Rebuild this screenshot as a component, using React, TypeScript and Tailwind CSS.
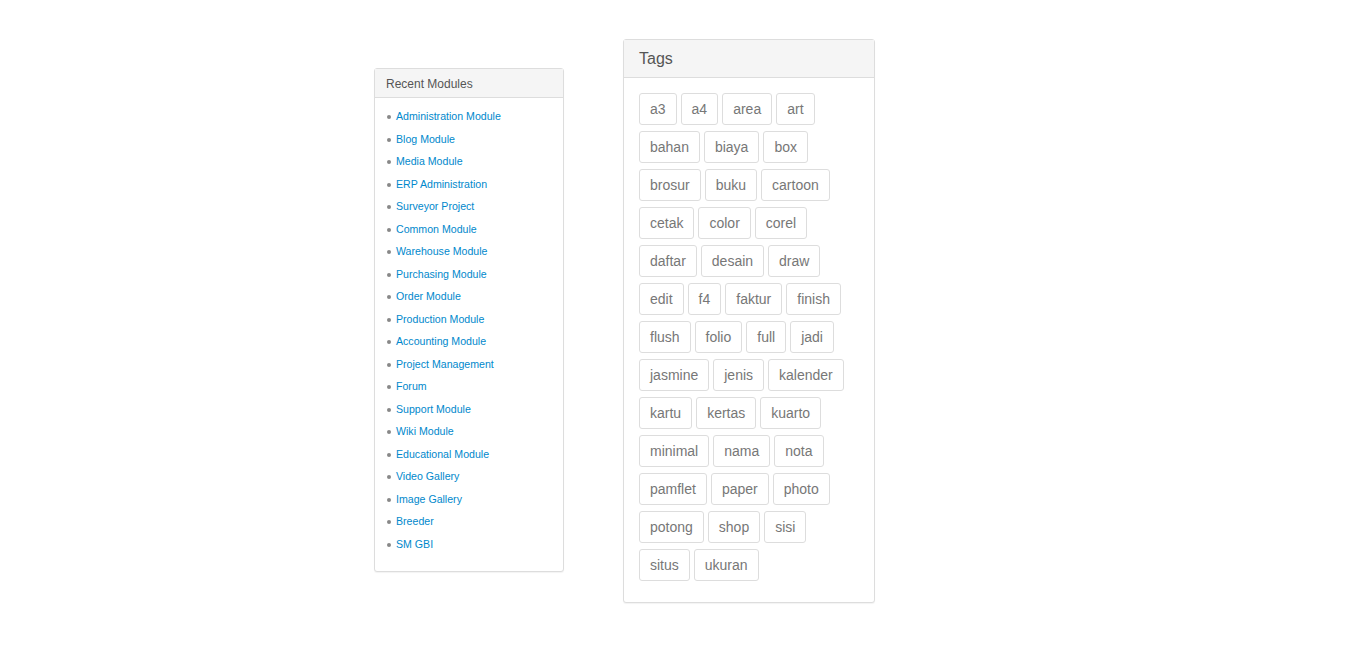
import React from 'react';

const modules: string[] = [
  'Administration Module',
  'Blog Module',
  'Media Module',
  'ERP Administration',
  'Surveyor Project',
  'Common Module',
  'Warehouse Module',
  'Purchasing Module',
  'Order Module',
  'Production Module',
  'Accounting Module',
  'Project Management',
  'Forum',
  'Support Module',
  'Wiki Module',
  'Educational Module',
  'Video Gallery',
  'Image Gallery',
  'Breeder',
  'SM GBI',
];

const tags: string[] = [
  'a3', 'a4', 'area', 'art',
  'bahan', 'biaya', 'box',
  'brosur', 'buku', 'cartoon',
  'cetak', 'color', 'corel',
  'daftar', 'desain', 'draw',
  'edit', 'f4', 'faktur', 'finish',
  'flush', 'folio', 'full', 'jadi',
  'jasmine', 'jenis', 'kalender',
  'kartu', 'kertas', 'kuarto',
  'minimal', 'nama', 'nota',
  'pamflet', 'paper', 'photo',
  'potong', 'shop', 'sisi',
  'situs', 'ukuran',
];

const RecentModules: React.FC = () => (
  <div className="mt-[68px] w-[190px] rounded-[3px] border border-[#dddddd] bg-white shadow-[0_1px_1px_rgba(0,0,0,0.05)]">
    <div className="h-[29px] border-b border-[#dddddd] bg-[#f5f5f5] px-[11px] pt-[1px] text-[12px] leading-[28px] text-[#555555]">
      Recent Modules
    </div>
    <ul className="pt-[8px] pb-[15px] pl-[12px]">
      {modules.map((m) => (
        <li key={m} className="flex h-[22.5px] items-center text-[10.6px]">
          <span className="mr-[5px] h-[4px] w-[4px] rounded-full bg-[#888888]" />
          <a href="#" className="text-[#0088cc]">{m}</a>
        </li>
      ))}
    </ul>
  </div>
);

const Tags: React.FC = () => (
  <div className="mt-[39px] w-[252px] rounded-[3px] border border-[#dddddd] bg-white shadow-[0_1px_1px_rgba(0,0,0,0.05)]">
    <div className="h-[38px] border-b border-[#dddddd] bg-[#f5f5f5] px-[15px] text-[16px] leading-[37px] text-[#555555]">
      Tags
    </div>
    <div className="flex flex-wrap gap-x-[4px] gap-y-[6px] px-[15px] pt-[15px] pb-[21px]">
      {tags.map((t) => (
        <a
          key={t}
          href="#"
          className="rounded-[3px] border border-[#dddddd] px-[10px] py-[5px] text-[14px] leading-[20px] text-[#777777]"
        >
          {t}
        </a>
      ))}
    </div>
  </div>
);

const App: React.FC = () => {
  return (
    <div className="flex min-h-[654px] items-start gap-[59px] bg-white pl-[374px] font-['Liberation_Sans',Arial,sans-serif]">
      <RecentModules />
      <Tags />
    </div>
  );
};

export default App;
